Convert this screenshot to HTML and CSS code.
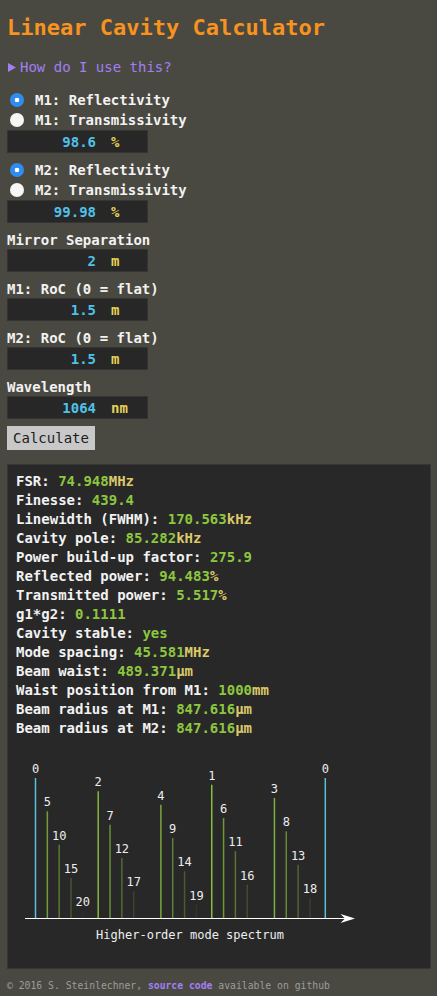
FILE: index.html
```html
<!DOCTYPE html>
<html lang="en">
<head>
<meta charset="utf-8">
<title>Linear Cavity Calculator</title>
<link rel="stylesheet" href="styles.css">
</head>
<body>
<h1 class="title">Linear Cavity Calculator</h1>
<div class="howto"><svg class="tri" viewBox="0 0 8 9"><polygon points="0,0 8,4.5 0,9"/></svg><span>How do I use this?</span></div>

<div class="radios first">
  <div class="radio"><span class="dot on"></span>M1: Reflectivity</div>
  <div class="radio"><span class="dot"></span>M1: Transmissivity</div>
</div>
<div class="field"><span class="val">98.6</span><span class="unit">%</span></div>

<div class="radios">
  <div class="radio"><span class="dot on"></span>M2: Reflectivity</div>
  <div class="radio"><span class="dot"></span>M2: Transmissivity</div>
</div>
<div class="field"><span class="val">99.98</span><span class="unit">%</span></div>

<div class="label">Mirror Separation</div>
<div class="field"><span class="val">2</span><span class="unit">m</span></div>

<div class="label">M1: RoC (0 = flat)</div>
<div class="field"><span class="val">1.5</span><span class="unit">m</span></div>

<div class="label">M2: RoC (0 = flat)</div>
<div class="field"><span class="val">1.5</span><span class="unit">m</span></div>

<div class="label">Wavelength</div>
<div class="field"><span class="val">1064</span><span class="unit">nm</span></div>

<button class="calc">Calculate</button>

<div class="results">
  <div class="lines">
    <div>FSR: <span class="v">74.948</span><span class="u">MHz</span></div>
    <div>Finesse: <span class="v">439.4</span></div>
    <div>Linewidth (FWHM): <span class="v">170.563</span><span class="u">kHz</span></div>
    <div>Cavity pole: <span class="v">85.282</span><span class="u">kHz</span></div>
    <div>Power build-up factor: <span class="v">275.9</span></div>
    <div>Reflected power: <span class="v">94.483</span><span class="u">%</span></div>
    <div>Transmitted power: <span class="v">5.517</span><span class="u">%</span></div>
    <div>g1*g2: <span class="v">0.1111</span></div>
    <div>Cavity stable: <span class="v">yes</span></div>
    <div>Mode spacing: <span class="v">45.581</span><span class="u">MHz</span></div>
    <div>Beam waist: <span class="v">489.371</span><span class="u">µm</span></div>
    <div>Waist position from M1: <span class="v">1000</span><span class="u">mm</span></div>
    <div>Beam radius at M1: <span class="v">847.616</span><span class="u">µm</span></div>
    <div>Beam radius at M2: <span class="v">847.616</span><span class="u">µm</span></div>
  </div>
  <svg class="chart" viewBox="0 0 422 230">
    <g class="bars">
      <line class="b0" x1="27.5" y1="40" x2="27.5" y2="180"/>
      <line style="stroke-opacity:0.952" x1="203.75" y1="46.67" x2="203.75" y2="180"/>
      <line style="stroke-opacity:0.905" x1="90.19" y1="53.33" x2="90.19" y2="180"/>
      <line style="stroke-opacity:0.857" x1="266.44" y1="60" x2="266.44" y2="180"/>
      <line style="stroke-opacity:0.810" x1="152.89" y1="66.67" x2="152.89" y2="180"/>
      <line style="stroke-opacity:0.762" x1="39.34" y1="73.33" x2="39.34" y2="180"/>
      <line style="stroke-opacity:0.714" x1="215.58" y1="80" x2="215.58" y2="180"/>
      <line style="stroke-opacity:0.667" x1="102.03" y1="86.67" x2="102.03" y2="180"/>
      <line style="stroke-opacity:0.619" x1="278.28" y1="93.33" x2="278.28" y2="180"/>
      <line style="stroke-opacity:0.571" x1="164.72" y1="100" x2="164.72" y2="180"/>
      <line style="stroke-opacity:0.524" x1="51.17" y1="106.67" x2="51.17" y2="180"/>
      <line style="stroke-opacity:0.476" x1="227.42" y1="113.33" x2="227.42" y2="180"/>
      <line style="stroke-opacity:0.429" x1="113.86" y1="120" x2="113.86" y2="180"/>
      <line style="stroke-opacity:0.381" x1="290.11" y1="126.67" x2="290.11" y2="180"/>
      <line style="stroke-opacity:0.333" x1="176.56" y1="133.33" x2="176.56" y2="180"/>
      <line style="stroke-opacity:0.286" x1="63.01" y1="140" x2="63.01" y2="180"/>
      <line style="stroke-opacity:0.238" x1="239.25" y1="146.67" x2="239.25" y2="180"/>
      <line style="stroke-opacity:0.190" x1="125.7" y1="153.33" x2="125.7" y2="180"/>
      <line style="stroke-opacity:0.143" x1="301.95" y1="160" x2="301.95" y2="180"/>
      <line style="stroke-opacity:0.095" x1="188.39" y1="166.67" x2="188.39" y2="180"/>
      <line style="stroke-opacity:0.048" x1="74.84" y1="173.33" x2="74.84" y2="180"/>
      <line class="b0" x1="317.3" y1="40" x2="317.3" y2="180"/>
    </g>
    <g class="nums">
      <text x="27.5" y="35">0</text>
      <text x="203.75" y="41.67">1</text>
      <text x="90.19" y="48.33">2</text>
      <text x="266.44" y="55">3</text>
      <text x="152.89" y="61.67">4</text>
      <text x="39.34" y="68.33">5</text>
      <text x="215.58" y="75">6</text>
      <text x="102.03" y="81.67">7</text>
      <text x="278.28" y="88.33">8</text>
      <text x="164.72" y="95">9</text>
      <text x="51.17" y="101.67">10</text>
      <text x="227.42" y="108.33">11</text>
      <text x="113.86" y="115">12</text>
      <text x="290.11" y="121.67">13</text>
      <text x="176.56" y="128.33">14</text>
      <text x="63.01" y="135">15</text>
      <text x="239.25" y="141.67">16</text>
      <text x="125.7" y="148.33">17</text>
      <text x="301.95" y="155">18</text>
      <text x="188.39" y="161.67">19</text>
      <text x="74.84" y="168.33">20</text>
      <text x="317.3" y="35">0</text>
    </g>
    <line class="axis" x1="17" y1="180.5" x2="340" y2="180.5"/>
    <polygon class="arrow" points="347,180.5 332.5,176 337,180.5 332.5,185"/>
    <text class="caption" x="182" y="201">Higher-order mode spectrum</text>
  </svg>
</div>

<footer class="foot">© 2016 S. Steinlechner, <span class="src">source code</span> available on github</footer>
</body>
</html>
```

FILE: styles.css
```css
html, body {
  margin: 0;
  padding: 0;
}

body {
  background: #4a4941;
  color: #f2f2f2;
  font-family: "DejaVu Sans Mono", "Liberation Mono", monospace;
  padding: 0 6px 0 7px;
}

.title {
  margin: 15px 0 0 0;
  font-size: 22px;
  line-height: 26px;
  font-weight: bold;
  color: #f7931e;
}

.howto {
  margin-top: 17px;
  display: flex;
  align-items: center;
  font-size: 14px;
  line-height: 18px;
  color: #a17ff2;
}

.tri {
  width: 8px;
  height: 9px;
  margin: 0 4px 0 1px;
  fill: #a17ff2;
}

.radios {
  margin-top: 7px;
}

.radios.first {
  margin-top: 14px;
}

.radio {
  display: flex;
  align-items: center;
  height: 20px;
  font-size: 14px;
  font-weight: bold;
}

.dot {
  width: 14px;
  height: 14px;
  border-radius: 50%;
  background: #f7f7f7;
  margin: 0 11px 0 3px;
  flex: none;
}

.dot.on {
  background: radial-gradient(circle, #ffffff 0 2px, #2f8cf0 2.6px);
}

.field {
  display: flex;
  align-items: center;
  width: 141px;
  height: 23px;
  box-sizing: border-box;
  background: #272727;
  border: 1px solid #343434;
  font-size: 14px;
  font-weight: bold;
}

.val {
  width: 88px;
  text-align: right;
  color: #4fc1e9;
}

.unit {
  margin-left: 15px;
  color: #e3d257;
}

.label {
  margin-top: 8px;
  font-size: 14px;
  line-height: 18px;
  font-weight: bold;
}

.calc {
  display: block;
  margin-top: 7px;
  width: 88px;
  height: 24px;
  padding: 0;
  border: none;
  border-radius: 0;
  background: #c8c8c8;
  color: #1c1c1c;
  font-family: "DejaVu Sans Mono", monospace;
  font-size: 14px;
}

.results {
  margin-top: 14px;
  background: #282828;
  border: 1px solid #363636;
}

.lines {
  padding: 7px 8px 0;
  font-size: 14px;
  line-height: 19px;
  font-weight: bold;
}

.v {
  color: #8dc63f;
}

.u {
  color: #dcc96a;
}

.chart {
  display: block;
  width: 422px;
  height: 230px;
}

.bars line {
  stroke: #8dc63f;
  stroke-width: 1.5;
}

.bars line.b0 {
  stroke: #5bc0de;
}

.nums text {
  font-family: "DejaVu Sans Mono", monospace;
  font-size: 12px;
  fill: #eeeeee;
  text-anchor: middle;
}

.axis {
  stroke: #ffffff;
  stroke-width: 1;
}

.arrow {
  fill: #ffffff;
}

.caption {
  font-family: "DejaVu Sans Mono", monospace;
  font-size: 12px;
  fill: #eeeeee;
  text-anchor: middle;
}

.foot {
  margin-top: 10px;
  font-size: 9.75px;
  line-height: 14px;
  color: #9c9c9c;
}

.src {
  color: #a17ff2;
  font-weight: bold;
}
```
